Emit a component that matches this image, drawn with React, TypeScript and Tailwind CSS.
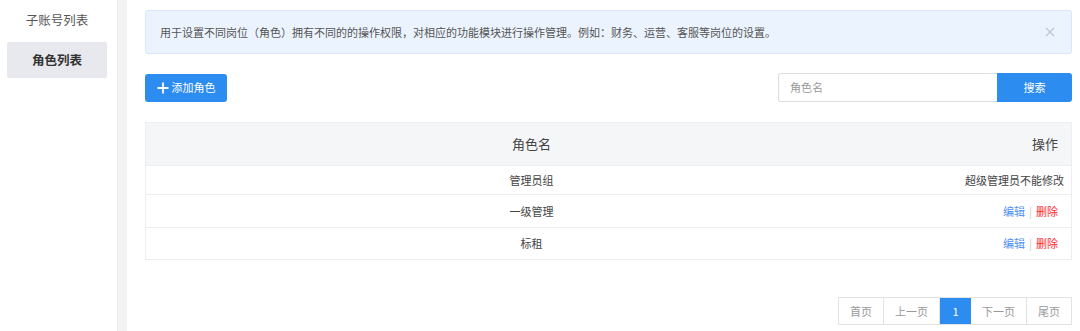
import React from "react";

export default function App() {
  return (
    <div className="w-[1080px] h-[331px] flex bg-white overflow-hidden font-['Noto_Sans_CJK_SC','Noto_Sans',sans-serif] text-[#333]">
      <div className="w-[117px] shrink-0 pt-[2px]">
        <div className="h-[36px] flex items-center justify-center text-[12.5px] text-[#555] pr-[3px]">子账号列表</div>
        <div className="mt-[4px] ml-[7px] mr-[10px] h-[36px] rounded-[2px] bg-[#e8e9ef] flex items-center justify-center text-[12.5px] font-bold text-[#333]">角色列表</div>
      </div>
      <div className="w-[10px] shrink-0 bg-[#f3f3f3] border-l border-[#ececec]"></div>
      <div className="flex-1 pl-[18px] pr-[8px] pt-[10px]">
        <div className="h-[44px] rounded-[3px] border border-[#d9e7fc] bg-[#ebf3fe] flex items-center justify-between pl-[14px] pr-[14px]">
          <span className="text-[11px] text-[#555]">用于设置不同岗位（角色）拥有不同的的操作权限，对相应的功能模块进行操作管理。例如：财务、运营、客服等岗位的设置。</span>
          <svg width="10" height="10" viewBox="0 0 10 10" className="mr-[2px]">
            <path d="M1 1L9 9M9 1L1 9" stroke="#c5c8ce" strokeWidth="1.4" />
          </svg>
        </div>
        <div className="mt-[19px] flex items-center justify-between">
          <button className="h-[28px] w-[82px] rounded-[3px] bg-[#2d8cf0] text-white text-[11px] flex items-center justify-center gap-[3px]">
            <svg width="12" height="12" viewBox="0 0 12 12">
              <path d="M6 0.5V11.5M0.5 6H11.5" stroke="#fff" strokeWidth="1.8" />
            </svg>
            添加角色
          </button>
          <div className="flex h-[29px]">
            <div className="w-[219px] border border-[#dcdee2] border-r-0 rounded-l-[3px] flex items-center pl-[11px] text-[11px] text-[#999]">角色名</div>
            <button className="w-[75px] bg-[#2d8cf0] text-white text-[11px] rounded-r-[3px]">搜索</button>
          </div>
        </div>
        <div className="mt-[20px] border border-[#ebeef2]">
          <div className="flex h-[43px] bg-[#f5f6f8] border-b border-[#ebeef2] items-center text-[13px] text-[#444]">
            <div className="w-[771px] text-center">角色名</div>
            <div className="flex-1 text-right pr-[13px]">操作</div>
          </div>
          <div className="flex h-[29px] border-b border-[#ebeef2] items-center text-[11px] text-[#444]">
            <div className="w-[771px] text-center">管理员组</div>
            <div className="flex-1 text-right pr-[7px]">超级管理员不能修改</div>
          </div>
          <div className="flex h-[33px] border-b border-[#ebeef2] items-center text-[11px] text-[#444]">
            <div className="w-[771px] text-center">一级管理</div>
            <div className="flex-1 text-right pr-[13px]">
              <span className="text-[#4a8ff5]">编辑</span>
              <span className="text-[#ccc] mx-[4px]">|</span>
              <span className="text-[#ff2a2a]">删除</span>
            </div>
          </div>
          <div className="flex h-[31px] items-center text-[11px] text-[#444]">
            <div className="w-[771px] text-center">标租</div>
            <div className="flex-1 text-right pr-[13px]">
              <span className="text-[#4a8ff5]">编辑</span>
              <span className="text-[#ccc] mx-[4px]">|</span>
              <span className="text-[#ff2a2a]">删除</span>
            </div>
          </div>
        </div>
        <div className="mt-[37px] flex justify-end">
          <div className="flex h-[28px] border border-[#e3e3e3] text-[11px] text-[#999]">
            <div className="w-[45px] flex items-center justify-center border-r border-[#e3e3e3]">首页</div>
            <div className="w-[56px] flex items-center justify-center border-r border-[#e3e3e3]">上一页</div>
            <div className="w-[31px] flex items-center justify-center bg-[#2d8cf0] text-white">1</div>
            <div className="w-[56px] flex items-center justify-center border-r border-[#e3e3e3]">下一页</div>
            <div className="w-[44px] flex items-center justify-center">尾页</div>
          </div>
        </div>
      </div>
    </div>
  );
}
